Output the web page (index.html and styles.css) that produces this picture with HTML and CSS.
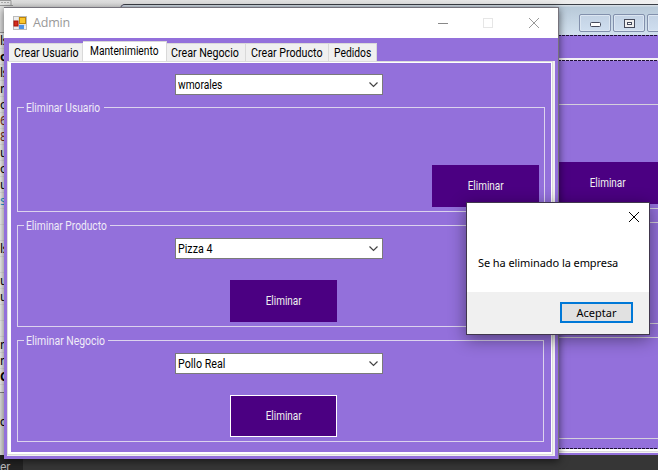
FILE: index.html
```
<!DOCTYPE html>
<html lang="es">
<head>
<meta charset="utf-8">
<title>Admin</title>
<link rel="stylesheet" href="styles.css">
</head>
<body>
<div class="desktop">
  <div class="editor">
    <div class="editor-bar"><svg width="14" height="18" viewBox="0 0 14 18"><path d="M0 .5h11v5M0 5.500h13" stroke="#999" fill="none"/><path d="M1 2.500h8" stroke="#aaa" stroke-dasharray="2 1"/></svg></div>
    <div class="code">
      <span>ls</span><b>o</b><span>ls</span><span>n</span><span>o</span><span class="num">6</span><span class="num">8</span><span>u</span><span>o</span><span>u</span><span class="blue">s</span><span></span><span></span><span>ls</span><span></span><span>u</span><span>u</span><span></span><span></span><span>n</span><span>n</span><b>C</b>
    </div>
    <div class="output"><span>o</span></div>
  </div>
  <div class="taskbar">er</div>

  <div class="back-window">
    <div class="back-title">
      <span class="aero low"><svg width="11" height="5"><rect x=".5" y=".5" width="10" height="4" rx="1" fill="#fff" stroke="#454a5b"/></svg></span>
      <span class="aero"><svg width="11" height="9"><rect x=".5" y=".5" width="10" height="8" fill="#eee" stroke="#454a5b"/><rect x="3.500" y="3.500" width="4" height="2" fill="#fff" stroke="#454a5b"/></svg></span>
      <span class="aero"><svg width="11" height="9"><path d="M1 1l9 7M10 1L1 8" stroke="#454a5b" stroke-width="3"/></svg></span>
    </div>
    <div class="back-body">
      <div class="back-strip"></div>
      <div class="back-page">
        <div class="back-group g1"><span class="back-button"><span class="cond">Eliminar</span></span></div>
        <div class="back-group g2"></div>
        <div class="back-group g3"></div>
      </div>
    </div>
  </div>

  <div class="window">
    <div class="titlebar">
      <svg class="app-icon" width="14" height="14" viewBox="0 0 14 14"><rect x=".5" y=".5" width="13" height="13" fill="#eee" stroke="#bbb"/><path d="M6 1v12M1 9h12" stroke="#ccc"/><rect x="6.500" y="1.500" width="6" height="6" fill="#fbc62c" stroke="#bd8509"/><rect x="1" y="5" width="4" height="5" fill="#d52c1d" stroke="#a81309"/><rect x="6" y="9" width="5" height="4" fill="#4d91e5"/></svg>
      <span class="caption">Admin</span>
      <svg class="controls" width="102" height="12" viewBox="0 0 102 12" fill="none"><path d="M0 6.500h10" stroke="#888"/><rect x="45.500" y="1.500" width="9" height="9" stroke="#e6e6e6"/><path d="M91 1l10 10M101 1L91 11" stroke="#999"/></svg>
    </div>
    <div class="tabs">
      <span class="tab t1"><span class="cond">Crear Usuario</span></span><span class="tab t2 active"><span class="cond">Mantenimiento</span></span><span class="tab t3"><span class="cond">Crear Negocio</span></span><span class="tab t4"><span class="cond">Crear Producto</span></span><span class="tab t5"><span class="cond">Pedidos</span></span>
    </div>
    <div class="frame">
      <div class="page">
        <div class="combo"><span class="cond name">wmorales</span><svg width="9" height="6"><path d="M.5 .5l4 4 4-4" fill="none" stroke="#444" stroke-width="1.200"/></svg></div>
        <div class="group user"><span class="legend"><span class="cond">Eliminar Usuario</span></span><span class="button"><span class="cond">Eliminar</span></span></div>
        <div class="group product"><span class="legend"><span class="cond">Eliminar Producto</span></span>
          <div class="combo"><span class="cond">Pizza 4</span><svg width="9" height="6"><path d="M.5 .5l4 4 4-4" fill="none" stroke="#444" stroke-width="1.200"/></svg></div>
          <span class="button"><span class="cond">Eliminar</span></span></div>
        <div class="group business"><span class="legend"><span class="cond">Eliminar Negocio</span></span>
          <div class="combo"><span class="cond">Pollo Real</span><svg width="9" height="6"><path d="M.5 .5l4 4 4-4" fill="none" stroke="#444" stroke-width="1.200"/></svg></div>
          <span class="button focused"><span class="cond">Eliminar</span></span></div>
      </div>
    </div>
  </div>

  <div class="dialog">
    <div class="dialog-body">
      <svg class="close" width="12" height="12"><path d="M1 1l10 10M11 1L1 11" stroke="#000"/></svg>
      <p>Se ha eliminado la empresa</p>
    </div>
    <div class="dialog-foot"><span class="accept">Aceptar</span></div>
  </div>
</div>
</body>
</html>
```
FILE: styles.css
```
* { box-sizing: border-box; }
body { margin: 0; }
svg { display: block; flex: none; }
.desktop {
  position: relative; width: 658px; height: 470px; overflow: hidden;
  background: linear-gradient(90deg, #dedede, #e4e4e4 60%, #f0f0f0);
  font: 12px/14px Roboto, "Liberation Sans", sans-serif; white-space: nowrap;
}
/* Condensed look of the classic dialog font */
.cond { display: inline-block; transform: scaleX(.89); transform-origin: 0 50%; }
.editor { width: 13px; height: 455px; background: #f7f7f7; }
.editor-bar { height: 33px; background: #e3e3e3; border-bottom: 1px solid #999; }
.code { height: 359px; display: flex; flex-direction: column; font: 12px/16px "Noto Sans", sans-serif; letter-spacing: -.5px; color: #000; }
.code span, .code b { height: 16px; flex: none; border-bottom: 1px solid #e8e8e8; }
.code .num { color: #7a3018; }
.code .blue { color: #28a0d8; }
.output { height: 63px; padding-top: 22px; background: #e5e5e5; border-top: 1px solid #888; }
.taskbar { height: 15px; padding: 7px 0 0; background: linear-gradient(90deg, #242424 23px, #363636 23px); color: #bbb; line-height: 10px; }

.back-window {
  position: absolute; left: 120px; top: 4px; width: 560px; height: 451px;
  border: 1px solid #3b3f46; border-bottom: 0; border-radius: 5px 0 0 0; background: #9370db; overflow: hidden;
}
.back-title {
  height: 30px; padding: 9px 0 0 458px; display: flex; gap: 2px;
  background: linear-gradient(#d5dde5 1px, #b8c9d8 2px, #d2e1ef);
}
.aero {
  width: 32px; height: 18px; flex: none; display: flex; align-items: center; justify-content: center;
  border: 1px solid #8290ac; border-radius: 2px; background: linear-gradient(#c3d2e4, #cfdeef); box-shadow: inset 0 0 0 1px #dce6f2;
}
.aero.low { padding-top: 3px; }
.back-body { height: 420px; padding-left: 437px; }
.back-strip { height: 25px; background: repeating-linear-gradient(90deg, #1d1035 0 3px, #9370db 3px 4px) 0 0 / 100% 1px no-repeat; border-bottom: 2px solid #f3f1f5; }
.back-page {
  height: 393px; display: flex; flex-direction: column; padding-top: 44px;
  background:
    repeating-linear-gradient(90deg, #1d1035 0 3px, #c0a8e8 3px 4px) 0 0 / 100% 1px no-repeat,
    repeating-linear-gradient(90deg, #1d1035 0 3px, #9370db 3px 4px) 0 388px / 100% 1px no-repeat,
    linear-gradient(#fff 2px, #dcdcdc 2px 3px, #f4f4f4 3px) 0 389px / 100% 4px no-repeat;
}
.back-group { border: solid #d5d0dc; border-width: 1px 0; flex: none; }
.g1 { height: 105px; padding-top: 57px; }
.g2 { height: 102px; margin-top: 13px; }
.g3 { height: 102px; margin-top: 13px; }
.back-button { display: flex; align-items: center; justify-content: center; width: 101px; height: 42px; padding-right: 2px; background: #4b0082; color: #f0f0f0; }

.window {
  position: absolute; left: 4px; top: 7px; width: 555px; height: 452px; background: #9370db;
  border: solid #75727b; border-width: 1px 1px 0 0; box-shadow: 0 2px 8px rgba(0,0,0,.6);
}
.titlebar { height: 30px; background: #fff; display: flex; align-items: center; padding: 0 18px 0 9px; }
.caption { margin-left: 6px; color: #999; font: 12.5px/16px "Open Sans", sans-serif; letter-spacing: -.2px; }
.controls { margin-left: auto; }
.tabs { height: 23px; padding: 3px 0 0 5px; display: flex; align-items: flex-end; }
.tab { height: 18px; padding-left: 4px; line-height: 18px; background: #f0f0f0; border: solid #d9d9d9; border-width: 1px 1px 0 0; color: #000; flex: none; }
.t1 { width: 74px; padding-left: 5px; }
.t2 { width: 84px; padding-left: 7px; }
.t2 .cond { transform: scaleX(.85); }
.t3 { width: 79px; }
.t4 { width: 83px; padding-left: 5px; }
.t5 { width: 48px; padding-left: 5px; }
.t5 .cond { transform: scaleX(.86); }
.tab.active { height: 20px; background: #fff; }
.frame { width: 548px; height: 395px; margin-left: 3px; background: #f0f0f0; padding: 0 2px 1px 0; }
.page {
  width: 546px; height: 394px; background: #9370db; border: 1px solid #dcdcdc; padding: 12px 6px 0;
  box-shadow: inset 1px 1px #fff, inset 3px 0 #fff, inset -1px -2px #fff;
}
.combo { width: 208px; height: 21px; margin-left: 161px; display: flex; align-items: center; justify-content: space-between; padding: 0 4px 0 2px; background: #fff; border: 1px solid #7a7a7a; color: #000; }
.combo .name { transform: scaleX(.85); }
.group { position: relative; width: 528px; margin-left: 3px; border: 1px solid #dcd3ee; color: #f0ebf8; }
.legend { position: absolute; left: 6px; top: -7px; width: 80px; height: 14px; padding-left: 2px; background: #9370db; }
.legend .cond { transform: scaleX(.85); }
.group .combo { margin: 12px 0 0 157px; }
.button { display: flex; align-items: center; justify-content: center; width: 107px; height: 42px; margin: 21px 0 0 212px; background: #4b0082; color: #f0f0f0; }
.button .cond, .back-button .cond { transform: scaleX(.83); transform-origin: 50% 50%; }
.user { height: 105px; margin-top: 12px; }
.user .button { margin: 57px 0 0 414px; }
.product { height: 102px; margin-top: 13px; }
.product .legend { width: 86px; }
.business { width: 527px; height: 102px; margin-top: 13px; }
.business .legend { width: 84px; }
.business .legend .cond { transform: scaleX(.87); }
.focused { border: 1px solid #fff; }

.dialog { position: absolute; left: 466px; top: 202px; width: 184px; height: 133px; border: 1px solid #40364d; background: #fff; box-shadow: 0 4px 16px rgba(0,0,0,.45); color: #000; font: 11px/14px "Noto Sans", sans-serif; }
.dialog-body { height: 89px; padding: 8px 9px 0 11px; }
.close { margin-left: auto; }
.dialog-body p { margin: 33px 0 0; letter-spacing: -.08px; }
.dialog-foot { height: 42px; background: #f0f0f0; padding: 10px 0 0 93px; }
.accept { display: flex; width: 73px; height: 21px; align-items: center; justify-content: center; border: 2px solid #0078d7; background: #e1e1e1; }
```
